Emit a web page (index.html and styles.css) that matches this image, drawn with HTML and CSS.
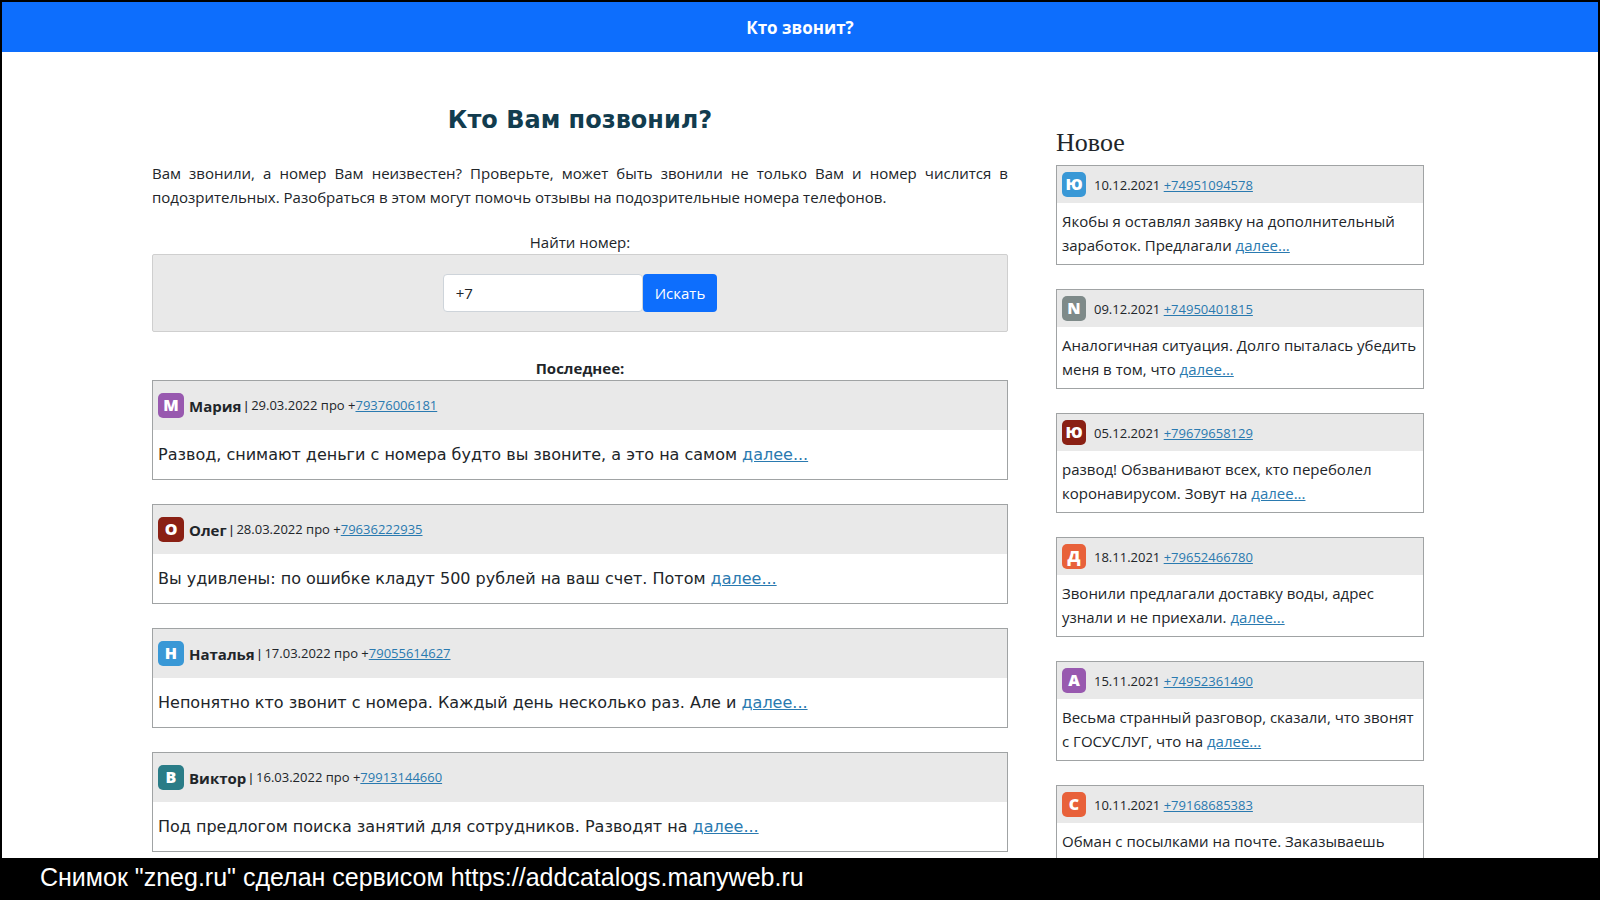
FILE: index.html
```html
<!DOCTYPE html>
<html lang="ru">
<head>
<meta charset="utf-8">
<title>Кто звонит?</title>
<link rel="stylesheet" href="styles.css">
</head>
<body>
<div class="site">
  <header class="topbar"><a class="brand" href="#">Кто звонит?</a></header>
  <div class="container">
    <main class="content">
      <h1 class="title">Кто Вам позвонил?</h1>
      <p class="intro">Вам звонили, а номер Вам неизвестен? Проверьте, может быть звонили не только Вам и номер числится в подозрительных. Разобраться в этом могут помочь отзывы на подозрительные номера телефонов.</p>
      <form class="search">
        <label class="search-label" for="phone">Найти номер:</label>
        <div class="search-box">
          <input class="phone" id="phone" type="text" value="+7">
          <button class="submit" type="button">Искать</button>
        </div>
      </form>
      <h2 class="latest">Последнее:</h2>
      <div class="list">
        <article class="review">
          <div class="review-head"><span class="avatar purple">М</span><b class="name">Мария</b><span class="meta"><span class="bar">|</span> 29.03.2022 про +<a href="#">79376006181</a></span></div>
          <p class="review-text">Развод, снимают деньги с номера будто вы звоните, а это на самом <a href="#">далее...</a></p>
        </article>
        <article class="review">
          <div class="review-head"><span class="avatar red">О</span><b class="name">Олег</b><span class="meta"><span class="bar">|</span> 28.03.2022 про +<a href="#">79636222935</a></span></div>
          <p class="review-text">Вы удивлены: по ошибке кладут 500 рублей на ваш счет. Потом <a href="#">далее...</a></p>
        </article>
        <article class="review">
          <div class="review-head"><span class="avatar blue">Н</span><b class="name">Наталья</b><span class="meta"><span class="bar">|</span> 17.03.2022 про +<a href="#">79055614627</a></span></div>
          <p class="review-text">Непонятно кто звонит с номера. Каждый день несколько раз. Але и <a href="#">далее...</a></p>
        </article>
        <article class="review">
          <div class="review-head"><span class="avatar teal">В</span><b class="name">Виктор</b><span class="meta"><span class="bar">|</span> 16.03.2022 про +<a href="#">79913144660</a></span></div>
          <p class="review-text">Под предлогом поиска занятий для сотрудников. Разводят на <a href="#">далее...</a></p>
        </article>
      </div>
    </main>
    <aside class="sidebar">
      <h2 class="side-title">Новое</h2>
      <div class="list">
        <article class="note">
          <div class="note-head"><span class="avatar small blue">Ю</span><span class="meta">10.12.2021 <a href="#">+74951094578</a></span></div>
          <p class="note-text">Якобы я оставлял заявку на дополнительный заработок. Предлагали <a href="#">далее...</a></p>
        </article>
        <article class="note">
          <div class="note-head"><span class="avatar small gray">N</span><span class="meta">09.12.2021 <a href="#">+74950401815</a></span></div>
          <p class="note-text">Аналогичная ситуация. Долго пыталась убедить меня в том, что <a href="#">далее...</a></p>
        </article>
        <article class="note">
          <div class="note-head"><span class="avatar small red">Ю</span><span class="meta">05.12.2021 <a href="#">+79679658129</a></span></div>
          <p class="note-text">развод! Обзванивают всех, кто переболел коронавирусом. Зовут на <a href="#">далее...</a></p>
        </article>
        <article class="note">
          <div class="note-head"><span class="avatar small orange">Д</span><span class="meta">18.11.2021 <a href="#">+79652466780</a></span></div>
          <p class="note-text">Звонили предлагали доставку воды, адрес узнали и не приехали. <a href="#">далее...</a></p>
        </article>
        <article class="note">
          <div class="note-head"><span class="avatar small purple">А</span><span class="meta">15.11.2021 <a href="#">+74952361490</a></span></div>
          <p class="note-text">Весьма странный разговор, сказали, что звонят с ГОСУСЛУГ, что на <a href="#">далее...</a></p>
        </article>
        <article class="note">
          <div class="note-head"><span class="avatar small orange">С</span><span class="meta">10.11.2021 <a href="#">+79168685383</a></span></div>
          <p class="note-text">Обман с посылками на почте. Заказываешь</p>
        </article>
      </div>
    </aside>
  </div>
</div>
<footer class="caption">Снимок "zneg.ru" сделан сервисом https://addcatalogs.manyweb.ru</footer>
</body>
</html>
```
FILE: styles.css
```css
* { box-sizing: border-box; }
body {
  margin: 0;
  height: 100vh;
  display: flex;
  flex-direction: column;
  overflow: hidden;
  background: #000;
  color: #212529;
  font: 15px/24px "Open Sans", "Noto Sans", sans-serif;
}
h1, h2, p { margin: 0; }
a { color: #2a7ab0; text-decoration: underline; }
.site {
  flex: 1;
  min-height: 0;
  overflow: hidden;
  background: #fff;
  border: 2px solid #000;
  border-bottom: 0;
}
.topbar {
  padding: 14px 12px 12px;
  background: #0d6efd;
  text-align: center;
}
.brand { color: #fff; font-size: 17px; font-weight: 700; text-decoration: none; }
.container {
  display: grid;
  grid-template-columns: 2fr 1fr;
  max-width: 1320px;
  margin: 0 auto;
}
.content { padding: 48px 12px; }
.title {
  color: #123c4e;
  font: 700 24px/40px "DejaVu Sans", sans-serif;
  text-align: center;
}
.intro { margin-top: 21px; text-align: justify; }
.search { margin-top: 21px; }
.search-label { display: block; text-align: center; }
.search-box {
  display: flex;
  justify-content: center;
  padding: 19px;
  background: #e9e9e9;
  border: 1px solid #cfcfcf;
  border-radius: 2px;
}
.phone {
  width: 200px;
  height: 38px;
  padding: 6px 12px;
  border: 1px solid #ced4da;
  border-radius: 4px;
  background: #fff;
  color: #212529;
  font: inherit;
}
.submit {
  height: 38px;
  padding: 6px 12px;
  border: 0;
  border-radius: 4px;
  background: #0d6efd;
  color: #fff;
  font: inherit;
}
.latest { margin-top: 24px; font-size: 15px; line-height: 24px; text-align: center; }
.list { display: grid; gap: 24px; }
.review, .note { border: 1px solid #a0a3a4; }
.review-head {
  display: flex;
  align-items: center;
  height: 49px;
  padding: 0 5px;
  background: #e9e9e9;
}
.avatar {
  width: 26px;
  height: 25px;
  border-radius: 5px;
  color: #fff;
  font-weight: 800;
  font-size: 16px;
  line-height: 25px;
  text-align: center;
}
.small { width: 24px; }
.purple { background: #9859af; }
.red { background: #8a2014; }
.blue { background: #3998d6; }
.teal { background: #2a7c87; }
.gray { background: #7e8a89; }
.orange { background: #e8613a; }
.name { margin: 0 3px 0 5px; }
.meta { font-size: 13px; }
.bar { font-family: "Liberation Sans", sans-serif; }
.review-text {
  padding: 12px 5px;
  font-family: "DejaVu Sans", sans-serif;
  font-size: 16px;
  line-height: 25px;
}
.sidebar { padding: 76px 36px 0; }
.side-title { font: 400 26px/30px "Liberation Serif", serif; margin-bottom: 7px; }
.note-head {
  display: flex;
  align-items: center;
  gap: 8px;
  height: 37px;
  padding: 0 5px;
  background: #e9e9e9;
}
.note-text { padding: 6px 5px 7px; }
.caption {
  padding: 4px 40px 8px;
  color: #fff;
  font: 25px/30px "Liberation Sans", sans-serif;
}
```
